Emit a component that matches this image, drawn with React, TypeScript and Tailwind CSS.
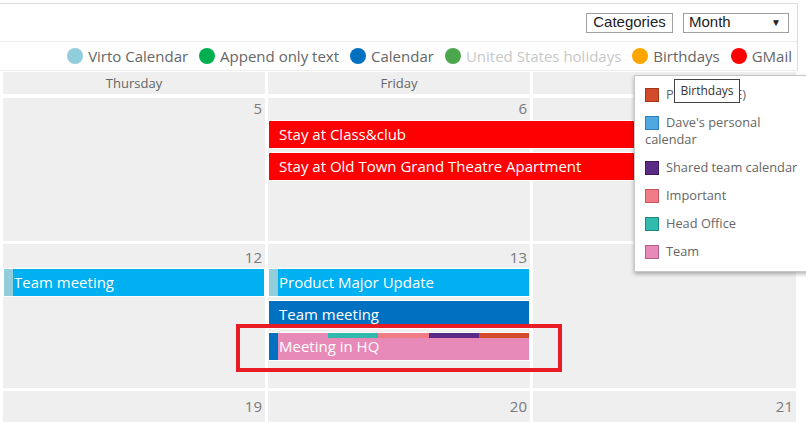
import React from 'react';

const legend = [
  { name: 'Virto Calendar', color: 'bg-[#92cddc]', text: 'text-[#666]' },
  { name: 'Append only text', color: 'bg-[#00b050]', text: 'text-[#666]' },
  { name: 'Calendar', color: 'bg-[#0070c0]', text: 'text-[#666]' },
  { name: 'United States holidays', color: 'bg-[#4ca64c]', text: 'text-[#c8c8c8]' },
  { name: 'Birthdays', color: 'bg-[#ffa500]', text: 'text-[#666]' },
  { name: 'GMail', color: 'bg-[#ff0000]', text: 'text-[#666]' },
];

const categories = [
  { name: 'Personal (OE)', color: 'bg-[#d24a2a] border-[#a33519]' },
  { name: "Dave's personal calendar", color: 'bg-[#4fa8e2] border-[#2f80b8]' },
  { name: 'Shared team calendar', color: 'bg-[#5b2a86] border-[#3e1a60]' },
  { name: 'Important', color: 'bg-[#f07c87] border-[#c4555f]' },
  { name: 'Head Office', color: 'bg-[#31b9ad] border-[#1f8a80]' },
  { name: 'Team', color: 'bg-[#e78ab8] border-[#b0608a]' },
];

// one calendar event bar, stripe on the left shows the calendar colour
function EventBar({
  title,
  bg,
  stripe,
  className,
  children,
}: {
  title: string;
  bg: string;
  stripe: string;
  className: string;
  children?: React.ReactNode;
}) {
  return (
    <div className={`${className} h-[29px] border border-white flex ${bg}`}>
      <div className={`w-[9px] shrink-0 ${stripe}`} />
      <div className="relative flex-1 min-w-0 pl-[1px] text-[15px] leading-[27px] text-white whitespace-nowrap overflow-hidden">
        {children}
        <span className="relative">{title}</span>
      </div>
    </div>
  );
}

function DayNum({ n, className }: { n: number; className: string }) {
  return (
    <div className={`bg-[#efefef] row-[1/-1] text-right pr-[3px] text-[15px] leading-[20px] text-[#7a7a7a] ${className}`}>
      {n}
    </div>
  );
}

export default function App() {
  return (
    <div className="relative w-[806px] h-[422px] overflow-hidden bg-white font-['Open_Sans',sans-serif]">
      <div className="mt-[3px] w-[798px] border-t border-r border-[#dcdcdc]">
        {/* toolbar */}
        <div className="h-[38px] flex items-center justify-end gap-[10px] pr-[8px] border-b border-[#ececec] font-['Liberation_Sans',Arial,sans-serif]">
          <div className="w-[87px] h-[20px] border border-[#a0a0a0] flex items-center justify-center text-[15px] text-[#222]">
            Categories
          </div>
          <div className="w-[106px] h-[20px] border border-[#a0a0a0] flex items-center justify-between pl-[5px] pr-[7px] text-[15px] text-[#222]">
            <span>Month</span>
            <span className="text-[10px]">▼</span>
          </div>
        </div>
        {/* legend */}
        <div className="h-[29px] flex items-center justify-end gap-[11px] pr-[5px] border-b border-[#ececec]">
          {legend.map((l) => (
            <div key={l.name} className="flex items-center gap-[5px]">
              <span className={`w-[16px] h-[16px] rounded-full ${l.color}`} />
              <span className={`text-[15px] leading-[20px] ${l.text}`}>{l.name}</span>
            </div>
          ))}
        </div>
      </div>

      {/* month grid */}
      <div className="pt-[1px] pl-[3px] flex flex-col gap-[3px]">
        <div className="grid grid-cols-[262px_262px_263px] gap-x-[3px] mb-[1px]">
          <div className="h-[22px] bg-[#efefef] text-center text-[13px] leading-[22px] text-[#666]">Thursday</div>
          <div className="h-[22px] bg-[#efefef] text-center text-[13px] leading-[22px] text-[#666]">Friday</div>
          <div className="h-[22px] bg-[#efefef]" />
        </div>

        <div className="h-[143px] grid grid-cols-[262px_262px_263px] grid-rows-[19px_29px_29px_1fr] gap-x-[3px] gap-y-[3px]">
          <DayNum n={5} className="col-start-1" />
          <DayNum n={6} className="col-start-2" />
          <div className="col-start-3 row-[1/-1] bg-[#efefef]" />
          <EventBar title="Stay at Class&club" bg="bg-[#ff0000]" stripe="bg-[#ff0000]" className="col-start-2 col-span-2 row-start-2" />
          <EventBar
            title="Stay at Old Town Grand Theatre Apartment"
            bg="bg-[#ff0000]"
            stripe="bg-[#ff0000]"
            className="col-start-2 col-span-2 row-start-3"
          />
        </div>

        <div className="h-[144px] grid grid-cols-[262px_262px_263px] grid-rows-[21px_29px_29px_29px_1fr] gap-x-[3px] gap-y-[3px]">
          <DayNum n={12} className="col-start-1 pt-[3px]" />
          <DayNum n={13} className="col-start-2 pt-[3px]" />
          <div className="col-start-3 row-[1/-1] bg-[#efefef]" />
          <EventBar title="Team meeting" bg="bg-[#00b0f0]" stripe="bg-[#92cddc]" className="col-start-1 row-start-2" />
          <EventBar title="Product Major Update" bg="bg-[#00b0f0]" stripe="bg-[#92cddc]" className="col-start-2 row-start-2" />
          <EventBar title="Team meeting" bg="bg-[#0070c0]" stripe="bg-[#0070c0]" className="col-start-2 row-start-3" />
          <EventBar title="Meeting in HQ" bg="bg-[#e78ab8]" stripe="bg-[#0070c0]" className="col-start-2 row-start-4">
            <div className="absolute top-0 left-0 right-0 h-[5px] flex">
              <div className="flex-1 bg-[#e78ab8]" />
              <div className="flex-1 bg-[#31b9ad]" />
              <div className="flex-1 bg-[#f07c87]" />
              <div className="flex-1 bg-[#5b2a86]" />
              <div className="flex-1 bg-[#d24a2a]" />
            </div>
          </EventBar>
        </div>

        <div className="h-[40px] grid grid-cols-[262px_262px_263px] gap-x-[3px]">
          <DayNum n={19} className="col-start-1 pt-[5px]" />
          <DayNum n={20} className="col-start-2 pt-[5px]" />
          <DayNum n={21} className="col-start-3 pt-[5px]" />
        </div>
      </div>

      {/* categories dropdown */}
      <div className="absolute left-[634px] top-[75px] w-[180px] h-[197px] bg-white border border-[#c8c8c8] shadow-[0_2px_4px_rgba(0,0,0,0.3)] pl-[10px] pr-[11px] pt-[10px] flex flex-col gap-[11px]">
        {categories.map((c) => (
          <div key={c.name} className="text-[12.8px] leading-[17px] text-[#666]">
            <span className={`inline-block align-[-3px] w-[14px] h-[14px] border mr-[7px] ${c.color}`} />
            {c.name}
          </div>
        ))}
      </div>

      {/* tooltip */}
      <div className="absolute left-[674px] top-[79px] w-[66px] h-[24px] bg-white border border-[#444] flex items-center justify-center text-[12px] text-[#333]">
        Birthdays
      </div>

      {/* highlight frame */}
      <div className="absolute left-[236px] top-[324px] w-[326px] h-[48px] border-[4px] border-[#e81c24]" />
    </div>
  );
}
